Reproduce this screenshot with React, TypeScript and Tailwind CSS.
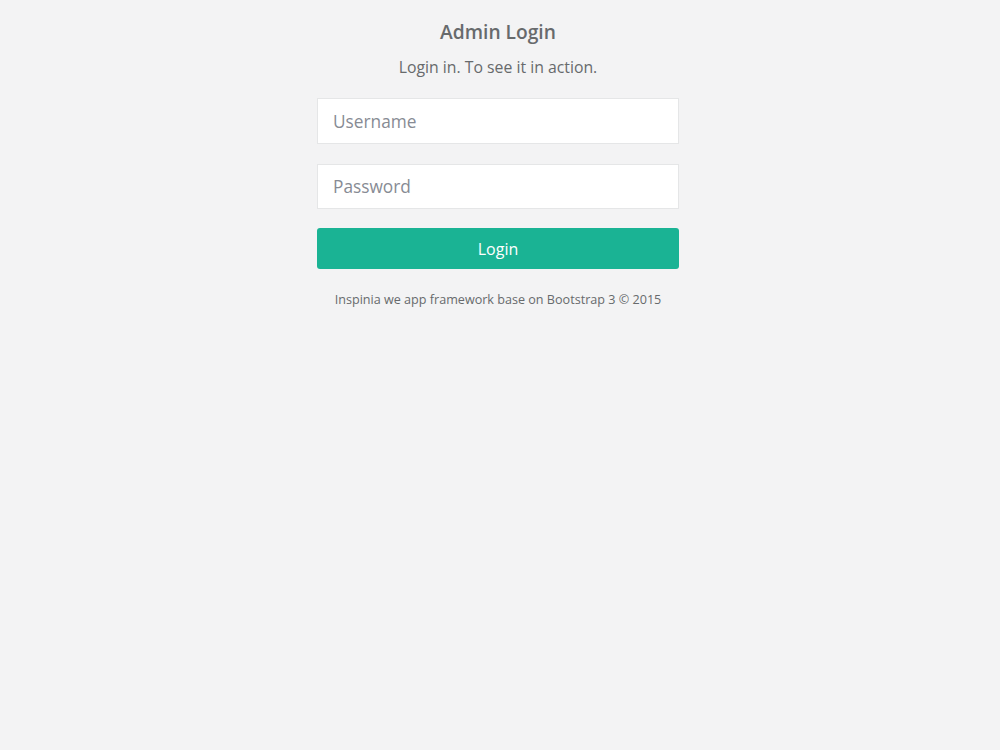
import React from 'react';

export default function App() {
  return (
    <div className="min-h-screen bg-[#f3f3f4] text-[#676a6c] font-['Open_Sans',sans-serif] pr-[4px]">
      <div className="w-[362px] mx-auto pt-[19px] text-center">
        <h3 className="text-[19.2px] font-semibold leading-[26px]">Admin Login</h3>
        <p className="text-[15.8px] leading-[22px] mt-[11px]">Login in. To see it in action.</p>
        <form className="mt-[20px] flex flex-col" onSubmit={(e) => e.preventDefault()}>
          <input
            type="text"
            placeholder="Username"
            className="h-[46px] w-full bg-white border border-[#e5e6e7] px-[15px] text-[17.3px] text-[#676a6c] placeholder:text-[#878b94] outline-none"
          />
          <input
            type="password"
            placeholder="Password"
            className="mt-[20px] h-[45px] w-full bg-white border border-[#e5e6e7] px-[15px] text-[17.3px] text-[#676a6c] placeholder:text-[#878b94] outline-none"
          />
          <button
            type="submit"
            className="mt-[19px] h-[41px] w-full rounded-[3px] bg-[#1ab394] text-white text-[16px] font-medium"
          >
            Login
          </button>
        </form>
        <p className="mt-[22px] text-[12.6px] leading-[18px]">
          Inspinia we app framework base on Bootstrap 3 © 2015
        </p>
      </div>
    </div>
  );
}
